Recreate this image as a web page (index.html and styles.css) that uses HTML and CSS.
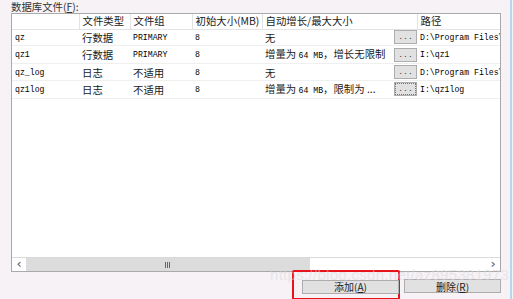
FILE: index.html
```html
<!DOCTYPE html>
<html lang="zh-CN">
<head>
  <meta charset="UTF-8" />
  <title>数据库文件</title>
  <link rel="stylesheet" href="styles.css">
</head>
<body>
  <div class="dialog">
    <div class="caption">数据库文件(<u>F</u>):</div>

    <div class="grid-box">
      <table class="files">
        <colgroup>
          <col class="c-name"><col class="c-type"><col class="c-group">
          <col class="c-size"><col class="c-grow"><col class="c-path">
        </colgroup>
        <thead>
          <tr>
            <th></th>
            <th>文件类型</th>
            <th>文件组</th>
            <th>初始大小(MB)</th>
            <th>自动增长/最大大小</th>
            <th>路径</th>
          </tr>
        </thead>
        <tbody>
          <tr>
            <td class="mono">qz</td>
            <td>行数据</td>
            <td class="mono">PRIMARY</td>
            <td class="mono">8</td>
            <td><div class="grow"><span>无</span><button class="dots">...</button></div></td>
            <td class="mono">D:\Program Files\</td>
          </tr>
          <tr>
            <td class="mono">qz1</td>
            <td>行数据</td>
            <td class="mono">PRIMARY</td>
            <td class="mono">8</td>
            <td><div class="grow"><span>增量为 <i class="mono">64 MB</i>，增长无限制</span><button class="dots">...</button></div></td>
            <td class="mono">I:\qz1</td>
          </tr>
          <tr>
            <td class="mono">qz_log</td>
            <td>日志</td>
            <td>不适用</td>
            <td class="mono">8</td>
            <td><div class="grow"><span>无</span><button class="dots">...</button></div></td>
            <td class="mono">D:\Program Files\</td>
          </tr>
          <tr>
            <td class="mono">qz1log</td>
            <td>日志</td>
            <td>不适用</td>
            <td class="mono">8</td>
            <td><div class="grow"><span>增量为 <i class="mono">64 MB</i>，限制为 ...</span><button class="dots focus">...</button></div></td>
            <td class="mono">I:\qz1log</td>
          </tr>
        </tbody>
      </table>

      <div class="hscroll">
        <div class="arrow">&lsaquo;</div>
        <div class="thumb"><span class="grip"></span></div>
        <div class="track"></div>
        <div class="arrow">&rsaquo;</div>
      </div>
    </div>

    <div class="actions">
      <div class="highlight">
        <button class="btn">添加(<u>A</u>)</button>
      </div>
      <button class="btn">删除(<u>R</u>)</button>
    </div>

    <div class="watermark">https://blog.csdn.net/az895381973</div>
  </div>
  <div class="edge"></div>
</body>
</html>
```

FILE: styles.css
```css
* {
  margin: 0;
  padding: 0;
  box-sizing: border-box;
}

body {
  width: 513px;
  height: 299px;
  background: #f6f2f6;
  font-family: "Noto Sans CJK SC", "Liberation Sans", sans-serif;
  font-size: 10.4px;
  color: #1a1a1a;
  position: relative;
  overflow: hidden;
}

.dialog {
  padding: 0 12px 0 11px;
  display: flex;
  flex-direction: column;
}

.caption {
  height: 13px;
  line-height: 14px;
  font-size: 10.4px;
  color: #333;
}

.caption u,
.btn u {
  text-decoration: underline;
}

.grid-box {
  width: 490px;
  height: 259px;
  background: #fff;
  border: 1px solid #a9a9a9;
  display: flex;
  flex-direction: column;
  justify-content: space-between;
}

table.files {
  width: 488px;
  border-collapse: collapse;
  table-layout: fixed;
}

.c-name { width: 67px; }
.c-type { width: 51px; }
.c-group { width: 62px; }
.c-size { width: 70px; }
.c-grow { width: 155px; }
.c-path { width: 83px; }

th {
  height: 15px;
  font-weight: normal;
  text-align: left;
  padding: 0 3px;
  font-size: 10.4px;
  line-height: 14px;
  border-right: 1px solid #e3e3e3;
  border-bottom: 1px solid #e3e3e3;
  white-space: nowrap;
  overflow: hidden;
}

th:last-child {
  border-right: none;
}

td {
  height: 16.7px;
  padding: 0 3px;
  font-size: 10.4px;
  line-height: 15px;
  border-bottom: 1px solid #efefef;
  white-space: nowrap;
  overflow: hidden;
}

.mono {
  font-family: "Liberation Mono", "DejaVu Sans Mono", monospace;
  font-size: 8.2px;
  font-style: normal;
  color: #000;
}

.grow {
  display: flex;
  align-items: center;
  justify-content: space-between;
}

.dots {
  width: 23px;
  height: 14px;
  margin-right: -3px;
  border: 1px solid #adadad;
  background: #e1e1e1;
  font-family: "Liberation Mono", monospace;
  font-size: 8px;
  line-height: 10px;
  color: #333;
}

.dots.focus {
  outline: 1px dotted #4a7cc0;
  outline-offset: -2px;
}

.hscroll {
  height: 14px;
  display: flex;
  border-top: 1px solid #d9d9d9;
}

.arrow {
  width: 14px;
  background: #fff;
  color: #555;
  font-size: 13px;
  line-height: 11px;
  text-align: center;
  font-family: "DejaVu Sans", sans-serif;
}

.thumb {
  width: 284px;
  background: #dcdcdc;
  display: flex;
  justify-content: center;
  align-items: center;
}

.grip {
  width: 6px;
  height: 6px;
  background: repeating-linear-gradient(90deg, #666 0 1px, #dcdcdc 1px 2px);
}

.track {
  flex: 1;
  background: #fff;
}

.actions {
  display: flex;
  justify-content: flex-end;
  align-items: flex-start;
  gap: 4px;
  margin-top: -2px;
}

.highlight {
  border: 2px solid #e8141b;
  border-radius: 2px;
  padding: 7px 0 4px 8px;
  width: 108px;
  height: 30px;
}

.btn {
  width: 97px;
  height: 14px;
  border: 1px solid #adadad;
  background: #e1e1e1;
  font-family: "Noto Sans CJK SC", sans-serif;
  font-size: 10px;
  line-height: 11px;
  color: #222;
}

.actions > .btn {
  margin-top: 9px;
}

.watermark {
  position: absolute;
  left: 270px;
  top: 266px;
  font-family: "Liberation Sans", sans-serif;
  font-size: 15px;
  color: rgba(215, 215, 215, 0.5);
  pointer-events: none;
  white-space: nowrap;
  letter-spacing: 0.3px;
}

.edge {
  position: absolute;
  top: 0;
  right: 1px;
  width: 2px;
  height: 299px;
  background: #b9d6f0;
}
```
